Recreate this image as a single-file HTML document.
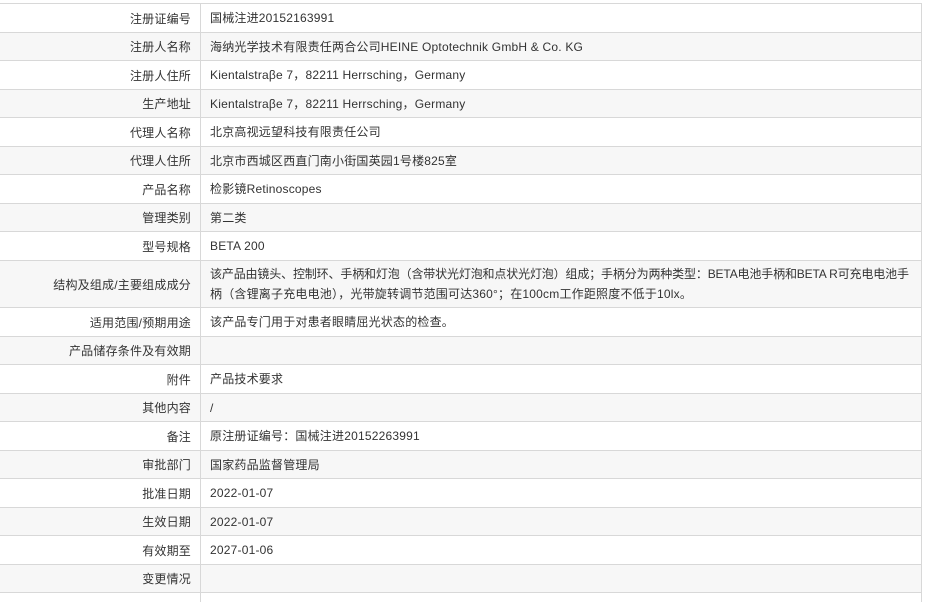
<!DOCTYPE html>
<html><head><meta charset="utf-8"><style>
*{margin:0;padding:0;box-sizing:border-box}
body{width:925px;height:595px;overflow:hidden;background:#fff;font-family:"Liberation Sans","Noto Sans CJK SC",sans-serif;font-size:12px;color:#333;letter-spacing:0.2px}
.r{position:absolute;left:0;width:922px;border-top:1px solid #d8d8d8;border-right:1px solid #d8d8d8}
.r.g{background:#f7f7f7}
.l{position:absolute;left:0;top:0;bottom:0;width:201px;border-right:1px solid #d8d8d8;text-align:right;padding-right:9px;display:flex;align-items:center;justify-content:flex-end}
.v{position:absolute;left:210px;right:4px;top:0;bottom:0;display:flex;align-items:center;line-height:20px;white-space:nowrap;overflow:hidden}
</style></head><body>
<div class="r" style="top:3px;height:29px"><div class="l">注册证编号</div><div class="v">国械注进20152163991</div></div>
<div class="r g" style="top:32px;height:28px"><div class="l">注册人名称</div><div class="v">海纳光学技术有限责任两合公司HEINE Optotechnik GmbH &amp; Co. KG</div></div>
<div class="r" style="top:60px;height:29px"><div class="l">注册人住所</div><div class="v">Kientalstraβe 7，82211 Herrsching，Germany</div></div>
<div class="r g" style="top:89px;height:28px"><div class="l">生产地址</div><div class="v">Kientalstraβe 7，82211 Herrsching，Germany</div></div>
<div class="r" style="top:117px;height:29px"><div class="l">代理人名称</div><div class="v">北京高视远望科技有限责任公司</div></div>
<div class="r g" style="top:146px;height:28px"><div class="l">代理人住所</div><div class="v">北京市西城区西直门南小街国英园1号楼825室</div></div>
<div class="r" style="top:174px;height:29px"><div class="l">产品名称</div><div class="v">检影镜Retinoscopes</div></div>
<div class="r g" style="top:203px;height:28px"><div class="l">管理类别</div><div class="v">第二类</div></div>
<div class="r" style="top:231px;height:29px"><div class="l">型号规格</div><div class="v">BETA 200</div></div>
<div class="r g" style="top:260px;height:47px"><div class="l">结构及组成/主要组成成分</div><div class="v"><div style="letter-spacing:-0.15px">该产品由镜头、控制环、手柄和灯泡（含带状光灯泡和点状光灯泡）组成；手柄分为两种类型：BETA电池手柄和BETA R可充电电池手<br><span style="letter-spacing:0.2px">柄（含锂离子充电电池），光带旋转调节范围可达360°；在100cm工作距照度不低于10lx。</span></div></div></div>
<div class="r" style="top:307px;height:29px"><div class="l">适用范围/预期用途</div><div class="v">该产品专门用于对患者眼睛屈光状态的检查。</div></div>
<div class="r g" style="top:336px;height:28px"><div class="l">产品储存条件及有效期</div><div class="v"></div></div>
<div class="r" style="top:364px;height:29px"><div class="l">附件</div><div class="v">产品技术要求</div></div>
<div class="r g" style="top:393px;height:28px"><div class="l">其他内容</div><div class="v">/</div></div>
<div class="r" style="top:421px;height:29px"><div class="l">备注</div><div class="v">原注册证编号：国械注进20152263991</div></div>
<div class="r g" style="top:450px;height:28px"><div class="l">审批部门</div><div class="v">国家药品监督管理局</div></div>
<div class="r" style="top:478px;height:29px"><div class="l">批准日期</div><div class="v">2022-01-07</div></div>
<div class="r g" style="top:507px;height:28px"><div class="l">生效日期</div><div class="v">2022-01-07</div></div>
<div class="r" style="top:535px;height:29px"><div class="l">有效期至</div><div class="v">2027-01-06</div></div>
<div class="r g" style="top:564px;height:28px"><div class="l">变更情况</div><div class="v"></div></div>
<div class="r" style="top:592px;height:10px"><div class="l"></div></div>
</body></html>
